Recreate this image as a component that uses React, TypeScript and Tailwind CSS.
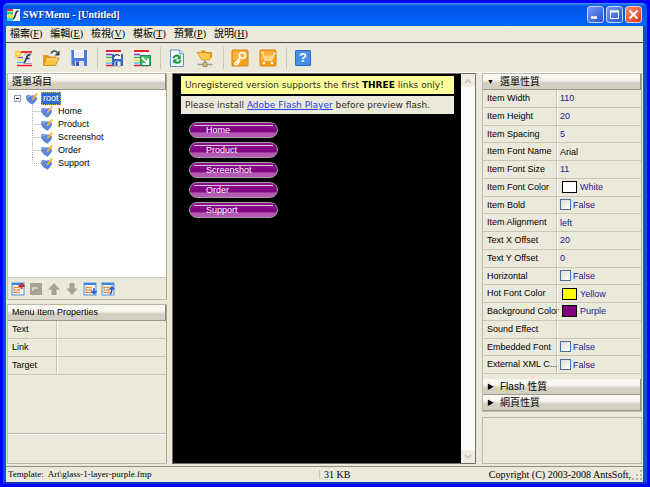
import type { ReactNode } from "react";

const menus = ["檔案(F)", "編輯(E)", "檢視(V)", "模板(T)", "預覽(P)", "說明(H)"];
const links = ["Home", "Product", "Screenshot", "Order", "Support"];

type Property = { name: string; value: string; kind?: "text" | "plain" | "check" | "color"; color?: string };

const properties: Property[] = [
  { name: "Item Width", value: "110" },
  { name: "Item Height", value: "20" },
  { name: "Item Spacing", value: "5" },
  { name: "Item Font Name", value: "Arial", kind: "plain" },
  { name: "Item Font Size", value: "11" },
  { name: "Item Font Color", value: "White", kind: "color", color: "#ffffff" },
  { name: "Item Bold", value: "False", kind: "check" },
  { name: "Item Alignment", value: "left" },
  { name: "Text X Offset", value: "20" },
  { name: "Text Y Offset", value: "0" },
  { name: "Horizontal", value: "False", kind: "check" },
  { name: "Hot Font Color", value: "Yellow", kind: "color", color: "#ffff00" },
  { name: "Background Color", value: "Purple", kind: "color", color: "#800080" },
  { name: "Sound Effect", value: "" },
  { name: "Embedded Font", value: "False", kind: "check" },
  { name: "External XML C...", value: "False", kind: "check" },
];

function Rainbow() {
  return (
    <>
      <path d="M1 1h15v16H1z" fill="#f6f6fb" />
      <path d="M1 2h15" stroke="#e8202a" strokeWidth="2" />
      <path d="M1 5.5h6" stroke="#7a3fd0" strokeWidth="1.6" />
      <path d="M1 8.5h6" stroke="#3dbb3a" strokeWidth="1.6" />
      <path d="M1 11.5h6" stroke="#e9de2c" strokeWidth="1.6" />
      <path d="M1 14h6" stroke="#2fc4e8" strokeWidth="1.4" />
      <path d="M1 16.5h15" stroke="#e8202a" strokeWidth="1.6" />
    </>
  );
}

function NewIcon() {
  return (
    <svg viewBox="0 0 18 18" className="size-[18px]">
      <path d="M3 3h15v14H3z" fill="#f6f6fb" />
      <path d="M6 3h12" stroke="#e8202a" strokeWidth="1.8" />
      <path d="M3 8.500h6" stroke="#7a3fd0" strokeWidth="1.4" />
      <path d="M3 11h6" stroke="#e9de2c" strokeWidth="1.4" />
      <path d="M3 13.500h6" stroke="#2fc4e8" strokeWidth="1.4" />
      <path d="M3 16.500h15" stroke="#e8202a" strokeWidth="1.6" />
      <path d="M9 5h8v10H9z" fill="#dfe6ee" />
      <path d="M10 5h8M10 14.500h8" stroke="#8b97a8" strokeWidth=".8" />
      <path d="M16.500 5.500c-3.500 0-3.500 2-4.300 4.200s-1.200 4-2.700 4M12 9.500h3.500" fill="none" stroke="#23314d" strokeWidth="1.500" />
      <path d="M4 0l1 2.500L7.500 1.500 6.500 4 9 5 6.500 6l.8 2.500L5 7.500 4 9.500 3 7.500.8 8.500 1.600 6 0 5l1.600-1L.8 1.500 3 2.500z" fill="#ffc936" />
      <circle cx="4" cy="4.800" r="1.300" fill="#fff6bf" />
    </svg>
  );
}

function OpenIcon() {
  return (
    <svg viewBox="0 0 18 18" className="size-[18px]">
      <path d="M1 16V6h5l1.500 1.500H14V16z" fill="#e79a1c" />
      <path d="M1.500 16.500L4 9h13l-3.500 7.500z" fill="#ffc23c" stroke="#c8811a" strokeWidth=".8" />
      <path d="M4.500 10h11" stroke="#ffe9a6" />
      <path d="M9 4.500c1-3 4.500-3.500 6.500-.8" fill="none" stroke="#33404a" strokeWidth="1.400" />
      <path d="M17.500 1.500v5h-5z" fill="#33404a" />
    </svg>
  );
}

function SaveIcon() {
  return (
    <svg viewBox="0 0 18 18" className="size-[18px]">
      <path d="M1 1h16v16H3l-2-2z" fill="#4b79d8" />
      <path d="M1.500 2v12.500" stroke="#86a9ee" />
      <path d="M4 1h10v8H4z" fill="#f4f7fd" />
      <path d="M5 4h8M5 6h8" stroke="#ccd8ef" strokeWidth=".7" />
      <path d="M5 12h9v5H5z" fill="#dce4f3" />
      <path d="M6 12.500h3V17H6z" fill="#3158ad" />
    </svg>
  );
}

function ExportIcon() {
  return (
    <svg viewBox="0 0 18 18" className="size-[18px]">
      <Rainbow />
      <path d="M7 5h11v12H8l-1-1z" fill="#3a66bd" />
      <path d="M9 5h7v5H9z" fill="#fff" />
      <path d="M9 8c1-3 4-3 5.500-1" fill="none" stroke="#28363e" strokeWidth="1.300" />
      <path d="M9.500 12.500h6V17h-6z" fill="#e5ecf7" />
      <path d="M10.500 13h2v4h-2z" fill="#31549e" />
    </svg>
  );
}

function ApplyIcon() {
  return (
    <svg viewBox="0 0 18 18" className="size-[18px]">
      <Rainbow />
      <path d="M7 6h11v11H7z" fill="#169443" />
      <path d="M8 7h9v9H8z" fill="#42b565" />
      <path d="M9 8.500l5.500 5.500M15 9.500V15H9.500" fill="none" stroke="#fff" strokeWidth="2" />
    </svg>
  );
}

function RefreshIcon() {
  return (
    <svg viewBox="0 0 18 18" className="size-[18px]">
      <path d="M2.500 1h9l4 4v12.500h-13z" fill="#f2f7ff" stroke="#5d8fd0" />
      <path d="M11.500 1v4h4" fill="#c3daf5" stroke="#5d8fd0" strokeWidth=".8" />
      <path d="M5.500 9.200c.5-2.500 4-3.500 5.500-1.500" fill="none" stroke="#149a2e" strokeWidth="2" />
      <path d="M12.800 5.800v4.400H8.500z" fill="#149a2e" />
      <path d="M12.500 11.200c-.5 2.500-4 3.500-5.500 1.500" fill="none" stroke="#149a2e" strokeWidth="2" />
      <path d="M5.200 14.800v-4.400h4.300z" fill="#149a2e" />
    </svg>
  );
}

function PublishIcon() {
  return (
    <svg viewBox="0 0 18 18" className="size-[18px]">
      <path d="M5 9V1.500h4l1 1.500h6V9z" fill="#e59c1d" />
      <path d="M1 3.500h9l5 1.500-1.500 6H6z" fill="#ffca4b" stroke="#cf8a1b" strokeWidth=".7" />
      <path d="M9 11v3M1.500 15.500h15" stroke="#97a0a6" strokeWidth="1.600" />
      <path d="M7 13.500h4v4H7z" fill="#e6b64a" stroke="#7f8587" strokeWidth=".8" />
    </svg>
  );
}

function KeyIcon() {
  return (
    <svg viewBox="0 0 18 18" className="size-[18px]">
      <rect x="1" y="1" width="16" height="16" rx="1" fill="#f5a11c" stroke="#d9820f" />
      <path d="M2 2h14v6L2 12z" fill="#ffbd4e" opacity=".6" />
      <circle cx="11.500" cy="6.500" r="3" fill="none" stroke="#fff" strokeWidth="1.600" />
      <path d="M9.200 8.800L4 14v1.500h2.500v-2H8V12l1.500-1" fill="none" stroke="#fff" strokeWidth="1.400" />
    </svg>
  );
}

function CartIcon() {
  return (
    <svg viewBox="0 0 18 18" className="size-[18px]">
      <rect x="1" y="1" width="16" height="16" rx="1" fill="#f5a11c" stroke="#d9820f" />
      <path d="M2 2h14v6L2 12z" fill="#ffbd4e" opacity=".6" />
      <path d="M2 3.500h2L6 11h6.500l2.500-6.500H17" fill="none" stroke="#ffecc4" strokeWidth="1.300" />
      <path d="M5 6.500h9L12.500 10h-6z" fill="#ffd27d" />
      <circle cx="5" cy="14" r="1.200" fill="#fff" />
      <circle cx="13" cy="14" r="1.200" fill="#fff" />
    </svg>
  );
}

function HelpIcon() {
  return (
    <span className="flex size-4 items-center justify-center rounded-[1px] border border-[#2d66c4] bg-[#4a8eea] font-['Liberation_Sans',sans-serif] text-[13px] leading-none font-bold text-white">
      ?
    </span>
  );
}

function HeartIcon() {
  return (
    <svg viewBox="0 0 12 13" className="h-[13px] w-3 shrink-0">
      <path d="M0 5C.5 2.500 3 2 5 3.800 7 2.500 10.500 3.500 11 6c.2 2.500-2 4-4.500 6.800C3 11 0 8.500 0 5z" fill="#5b86e0" />
      <path d="M1.300 5.500c.4-1.600 1.600-1.900 2.800-1" fill="none" stroke="#b4ccfa" />
      <path d="M6 6.500L10.500.8l1.300 1.500-4.600 5.500-1.500.6z" fill="#f9b428" />
    </svg>
  );
}

function Sheet({ children }: { children: ReactNode }) {
  return (
    <svg viewBox="0 0 14 14" className="size-3.5">
      <rect x="1" y="1" width="12" height="12" fill="#eef5ff" stroke="#4f93dd" />
      <path d="M1 2h12" stroke="#3b84dc" strokeWidth="2" />
      <path d="M3 4v7M3 5.500h3M3 8h3M3 10.500h3" stroke="#e08a3c" />
      <path d="M6 5.500h3M6 8h3M6 10.500h3" stroke="#f09238" strokeWidth="1.600" />
      {children}
    </svg>
  );
}

function ToolButton({ label, children }: { label: string; children: ReactNode }) {
  return (
    <button aria-label={label} className="flex h-7 w-7 items-center justify-center">
      {children}
    </button>
  );
}

function Separator() {
  return <span className="mr-0.5 ml-1 h-[22px] w-px bg-[#cbc8b8]" />;
}

function SmallButton({ label, children }: { label: string; children: ReactNode }) {
  return (
    <button aria-label={label} className="flex size-[18px] items-center justify-center">
      {children}
    </button>
  );
}

function PanelHeader({ children }: { children: ReactNode }) {
  return (
    <h2 className="flex h-4 shrink-0 items-center border-r border-b border-r-[#8d8b80] border-b-[#9a988c] bg-linear-to-b from-[#f8f7f1] from-40% to-[#d3d0c2] to-60% px-1 text-[10px] leading-none">
      {children}
    </h2>
  );
}

function PropertyRow({ name, value, kind = "text", color }: Property) {
  const id = name.replace(/\W+/g, "-").toLowerCase();
  return (
    <div className="flex min-h-0 flex-1 border-b border-[#c9c6b8]">
      <label htmlFor={id} className="w-[74px] shrink-0 border-r border-[#c9c6b8] pl-1 leading-4 whitespace-nowrap">
        {name}
      </label>
      <div className="flex min-w-0 flex-1 items-center border-l border-white pl-0.5 text-[#1a1a8c]">
        {kind === "check" && (
          <>
            <input
              id={id}
              type="checkbox"
              className="size-[11px] shrink-0 appearance-none border border-[#46719c] bg-linear-to-br from-[#dcdcd2] to-white"
            />
            <span className="pl-0.5 leading-4">{value}</span>
          </>
        )}
        {kind === "color" && (
          <button id={id} className="flex items-center gap-[3px] pl-0.5 leading-4">
            <span className="h-3 w-[15px] border border-black" style={{ backgroundColor: color }} />
            {value}
          </button>
        )}
        {kind === "text" && <input id={id} defaultValue={value} className="h-4 w-full min-w-0 outline-none" />}
        {kind === "plain" && <input id={id} defaultValue={value} className="h-4 w-full min-w-0 text-black outline-none" />}
      </div>
    </div>
  );
}

function ScrollArrow({ down = false }: { down?: boolean }) {
  return (
    <button aria-label={down ? "Scroll down" : "Scroll up"} className="flex h-[13px] w-full items-center justify-center rounded-[2px] bg-[#efede3]">
      <svg viewBox="0 0 8 6" className="h-1.5 w-2">
        <path d={down ? "M1 1l3 3 3-3" : "M1 5l3-3 3 3"} fill="none" stroke="#c5c2b4" strokeWidth="1.500" />
      </svg>
    </button>
  );
}

const panel = "flex flex-col border border-[#bbb8aa] border-r-[#aaa798]";

export default function App() {
  return (
    <div className="h-screen bg-[#0000ff] px-[3px] pt-[3px] pb-[3px] font-['Liberation_Sans','Noto_Sans_CJK_TC',sans-serif] text-[9px] text-black">
      <div className="flex h-full flex-col rounded-t-[5px] border-b-2 border-[#0a37c8] bg-[#0a4fe0]">
        {/* Title bar */}
        <header className="flex h-[23px] shrink-0 items-center rounded-t-[5px] bg-linear-to-b from-[#3a8cf8] from-0% via-[#0052e6] via-15% to-[#0068ff] pr-[5px] pl-1">
          <svg viewBox="0 0 13 12" className="h-3 w-[13px]">
            <path d="M0 0h13v12H0z" fill="#f2f4f6" />
            <path d="M0 1h6" stroke="#e8302a" strokeWidth="2" />
            <path d="M0 4h6" stroke="#3ecb66" strokeWidth="3" />
            <path d="M0 7.500h6" stroke="#f0e62c" strokeWidth="3" />
            <path d="M0 10.500h6" stroke="#32c8ea" strokeWidth="3" />
            <path d="M11.500 2c-3 0-2.500 3-3.500 5s-1 3-2 3" fill="none" stroke="#26313e" strokeWidth="1.600" />
          </svg>
          <h1 className="flex-1 pl-[3px] font-['Liberation_Serif',serif] text-[10px] font-bold text-white [text-shadow:1px_1px_0_#0a2f8a]">
            SWFMenu - [Untitled]
          </h1>
          <div className="flex gap-0.5">
            <button aria-label="Minimize" className="h-[17px] w-[17px] rounded-[3px] border border-[#c5d5f8] bg-linear-to-br from-[#7a9cf0] to-[#2450d0]">
              <svg viewBox="0 0 15 15">
                <path d="M3 10.500h6" stroke="#fff" strokeWidth="2.400" />
              </svg>
            </button>
            <button aria-label="Maximize" className="h-[17px] w-[17px] rounded-[3px] border border-[#c5d5f8] bg-linear-to-br from-[#7a9cf0] to-[#2450d0]">
              <svg viewBox="0 0 15 15">
                <path d="M3.500 4h8v7.500h-8z" fill="none" stroke="#fff" />
                <path d="M3 4.500h9" stroke="#fff" strokeWidth="2" />
              </svg>
            </button>
            <button aria-label="Close" className="h-[17px] w-[17px] rounded-[3px] border border-[#f4cfc6] bg-linear-to-br from-[#f08a6c] to-[#d8360c]">
              <svg viewBox="0 0 15 15">
                <path d="M3.500 3.500l8 8m0-8l-8 8" stroke="#fff" strokeWidth="2" />
              </svg>
            </button>
          </div>
        </header>

        <div className="mr-1 ml-[3px] flex min-h-0 flex-1 flex-col bg-[#ebe9d9]">
          {/* Menu bar */}
          <nav className="flex h-[17px] shrink-0 items-center gap-2 border-b border-[#4c4945] pl-1 font-['Liberation_Serif','Noto_Sans_CJK_TC',serif] text-[10px] leading-none">
            {menus.map((menu) => (
              <button key={menu} className="whitespace-nowrap">
                {menu.slice(0, 3)}
                <u>{menu[3]}</u>)
              </button>
            ))}
          </nav>

          {/* Toolbar */}
          <div className="flex h-[29px] shrink-0 items-center pl-[3px]">
            <ToolButton label="New"><NewIcon /></ToolButton>
            <ToolButton label="Open"><OpenIcon /></ToolButton>
            <ToolButton label="Save"><SaveIcon /></ToolButton>
            <Separator />
            <ToolButton label="Export"><ExportIcon /></ToolButton>
            <ToolButton label="Apply template"><ApplyIcon /></ToolButton>
            <Separator />
            <ToolButton label="Refresh"><RefreshIcon /></ToolButton>
            <ToolButton label="Publish"><PublishIcon /></ToolButton>
            <Separator />
            <ToolButton label="Register"><KeyIcon /></ToolButton>
            <ToolButton label="Order"><CartIcon /></ToolButton>
            <Separator />
            <ToolButton label="Help"><HelpIcon /></ToolButton>
          </div>

          <div className="flex min-h-0 flex-1 border-t border-white pl-px">
            {/* Left column */}
            <aside className="flex w-[160px] shrink-0 flex-col gap-1">
              <section className={`${panel} h-[227px] shrink-0`}>
                <PanelHeader>選單項目</PanelHeader>
                <div className="flex-1 bg-white pt-0.5 pl-1.5">
                  <div className="flex h-[13px] items-center">
                    <button aria-label="Collapse" className="flex size-[7px] items-center justify-center border border-[#8a9db8]">
                      <span className="h-px w-[3px] bg-black" />
                    </button>
                    <span className="w-[5px]" />
                    <HeartIcon />
                    <span className="ml-[3px] bg-[#316ac5] px-0.5 leading-[13px] text-white outline-1 -outline-offset-1 outline-dotted outline-[#d8a850]">root</span>
                  </div>
                  <ul className="pl-[18px]">
                    {links.map((link, i) => (
                      <li key={link} className="flex h-[13px] items-center">
                        <svg viewBox="0 0 9 13" className="h-[13px] w-[9px]">
                          <path
                            d={i === links.length - 1 ? "M.5 0v6.500H9" : "M.5 0v13M.5 6.500H9"}
                            fill="none"
                            stroke="#b5b2a2"
                            strokeDasharray="1 1"
                          />
                        </svg>
                        <HeartIcon />
                        <span className="pl-[5px] leading-none">{link}</span>
                      </li>
                    ))}
                  </ul>
                </div>
                <div className="flex h-[22px] items-center border-t border-[#c9c6b8] pl-px">
                  <SmallButton label="Add item">
                    <Sheet>
                      <path d="M10.500 1v6M7.500 4h6" stroke="#e02020" strokeWidth="1.800" />
                    </Sheet>
                  </SmallButton>
                  <SmallButton label="Delete item">
                    <svg viewBox="0 0 14 14" className="size-3.5">
                      <path d="M1 1h12v12H1z" fill="#a5a395" />
                      <path d="M4 9V6h5" fill="none" stroke="#e4e1d2" strokeWidth="1.600" />
                    </svg>
                  </SmallButton>
                  <SmallButton label="Move up">
                    <svg viewBox="0 0 14 14" className="size-3.5">
                      <path d="M7 1l6 6.500H9.500V13h-5V7.500H1z" fill="#a5a395" />
                    </svg>
                  </SmallButton>
                  <SmallButton label="Move down">
                    <svg viewBox="0 0 14 14" className="size-3.5">
                      <path d="M7 13l6-6.500H9.500V1h-5v5.500H1z" fill="#a5a395" />
                    </svg>
                  </SmallButton>
                  <SmallButton label="Move in">
                    <Sheet>
                      <path d="M11 6v5M8.500 9l2.500 2.500L13.500 9" fill="none" stroke="#2a5bd0" strokeWidth="1.600" />
                    </Sheet>
                  </SmallButton>
                  <SmallButton label="Move out">
                    <Sheet>
                      <path d="M9 12c2-1 2-4 2-6M8.800 7.500L11 5l2.200 2.500" fill="none" stroke="#2a5bd0" strokeWidth="1.600" />
                    </Sheet>
                  </SmallButton>
                </div>
              </section>

              <section className={`${panel} mb-0.5 min-h-0 flex-1`}>
                <PanelHeader>
                  <span className="text-[9px]">Menu Item Properties</span>
                </PanelHeader>
                {["Text", "Link", "Target"].map((name) => (
                  <div key={name} className="flex h-[18px] shrink-0 border-b border-[#c9c6b8]">
                    <label htmlFor={name} className="w-[49px] border-r border-[#c9c6b8] pl-1 leading-4">
                      {name}
                    </label>
                    <input id={name} className="min-w-0 flex-1 border-l border-white outline-none" />
                  </div>
                ))}
                <div className="flex-1" />
                <div className="h-[30px] border-t border-[#bbb8aa] shadow-[inset_0_1px_0_white]" />
              </section>
            </aside>

            {/* Preview */}
            <main className="mr-1.5 mb-0.5 ml-[5px] flex min-w-0 flex-1 border border-[#716f64]">
              <div className="min-w-0 flex-1 bg-black pt-0.5 pr-[7px] pl-2 font-['DejaVu_Sans',sans-serif]">
                <p className="h-[18px] bg-[#ffff99] pl-1 leading-[18px] whitespace-nowrap text-[#2b2b2b]">
                  Unregistered version supports the first <b className="text-black">THREE</b> links only!
                </p>
                <p className="mt-0.5 h-[18px] bg-[#ebe9d9] pl-1 leading-[18px] whitespace-nowrap text-[#2b2b2b]">
                  Please install <a href="#flash" className="text-[#2440f0] underline">Adobe Flash Player</a> before preview flash.
                </p>
                <ul className="flex flex-col gap-1 pt-2 pl-2 font-['Liberation_Sans',sans-serif]">
                  {links.map((link) => (
                    <li key={link} className="flex">
                      <button className="relative h-4 w-[89px] rounded-full border border-[#a59aa5] bg-linear-to-b from-[#8a108a] from-10% via-[#800080] via-60% to-[#b45ab4] to-75% pl-4 text-left leading-[14px] text-white">
                        <span className="absolute top-0.5 right-1 left-1 h-px bg-[#d9c4d9]" />
                        {link}
                      </button>
                    </li>
                  ))}
                </ul>
              </div>
              <div className="flex w-3.5 shrink-0 flex-col justify-between bg-[#fcfcfa]">
                <ScrollArrow />
                <ScrollArrow down />
              </div>
            </main>

            {/* Right column */}
            <aside className="mr-px mb-0.5 flex w-[160px] shrink-0 flex-col gap-[5px]">
              <section className={`${panel} shrink-0`}>
                <PanelHeader>
                  <span className="w-[13px] text-[7px]">▼</span>選單性質
                </PanelHeader>
                <div className="flex h-[284px] flex-col">
                  {properties.map((property) => (
                    <PropertyRow key={property.name} {...property} />
                  ))}
                </div>
                <div className="h-[5px]" />
                <PanelHeader>
                  <span className="w-[13px] text-[7px]">▶</span>Flash 性質
                </PanelHeader>
                <PanelHeader>
                  <span className="w-[13px] text-[7px]">▶</span>網頁性質
                </PanelHeader>
              </section>
              <section className="flex-1 border border-[#bbb8aa]" />
            </aside>
          </div>

          {/* Status bar */}
          <footer className="flex h-4 shrink-0 items-center border-t border-[#8d8b80] pl-0.5 font-['Liberation_Serif',serif] text-[10px] leading-none whitespace-nowrap">
            <span className="w-[312px] shrink-0 border-r border-[#c9c6b8] text-[9px]">Template:&nbsp; Art\glass-1-layer-purple.fmp</span>
            <span className="flex-1 pl-1">31 KB</span>
            <span>Copyright (C) 2003-2008 AntsSoft,</span>
            <svg viewBox="0 0 12 12" className="size-3">
              <path d="M9 2h2M9 6h2M5 6h2M9 10h2M5 10h2M1 10h2" stroke="#b5b2a2" strokeWidth="2" />
            </svg>
          </footer>
        </div>
      </div>
    </div>
  );
}
